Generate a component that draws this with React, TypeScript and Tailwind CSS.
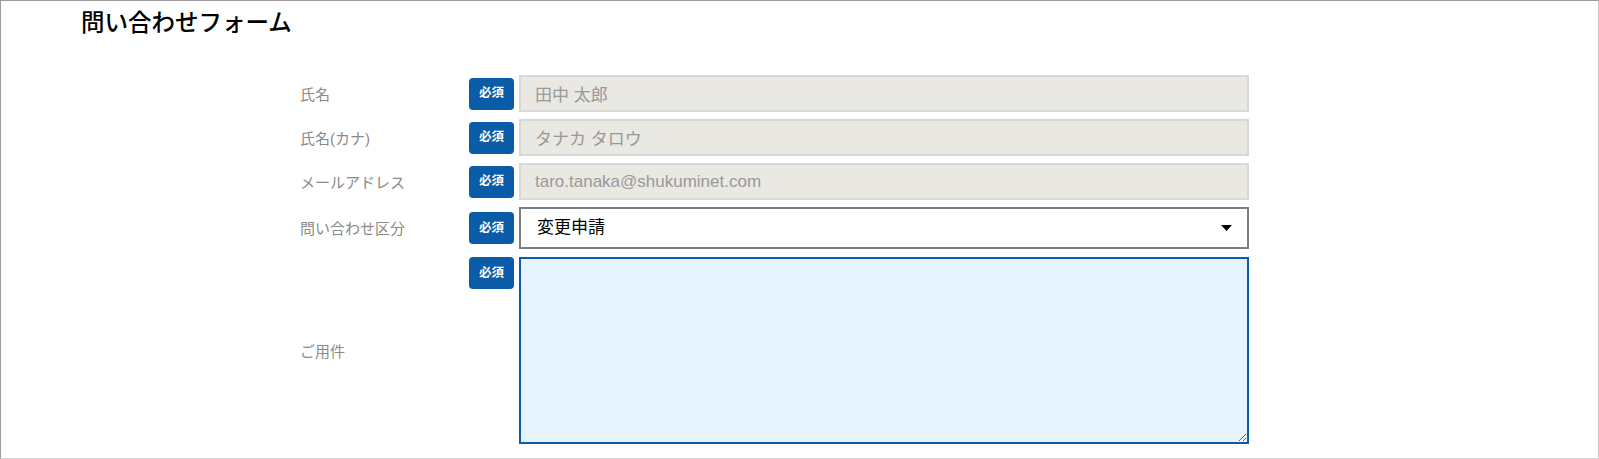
import React from "react";

const font = { fontFamily: '"Liberation Sans", "Noto Sans CJK JP", sans-serif' };

function Badge({ top = false }: { top?: boolean }) {
  return (
    <div
      className={`w-[45px] h-[32px] rounded-[4px] bg-[#0a5ca8] text-white text-[12.5px] font-semibold flex items-center justify-center shrink-0 ${top ? "self-start" : ""}`}
    >
      必須
    </div>
  );
}

function Row({ label, children, top = false, height }: { label: string; children: React.ReactNode; top?: boolean; height: string }) {
  return (
    <div className={`flex items-center ${height}`}>
      <div className="w-[169px] shrink-0 text-[15px] text-[#8a8a8a] self-center pt-[3px]">{label}</div>
      <div className={`flex ${top ? "items-start" : "items-center"} gap-[5px] h-full`}>
        <Badge top={top} />
        {children}
      </div>
    </div>
  );
}

export default function App() {
  return (
    <div
      className="w-[1599px] h-[459px] border-t border-l border-[#9c9c9c] border-r border-r-[#c8c8c8] border-b border-b-[#d4d4d4] bg-white overflow-hidden"
      style={font}
    >
      <div className="pl-[80px] pt-[7px] h-[74px]">
        <h1 className="text-[23.5px] leading-[30px] font-medium text-black">問い合わせフォーム</h1>
      </div>
      <div className="pl-[299px] flex flex-col gap-[7px]">
        <Row label="氏名" height="h-[37px]">
          <input
            readOnly
            value="田中 太郎"
            className="w-[730px] h-[37px] bg-[#e9e8e2] border-2 border-[#d8d8d4] pl-[14px] text-[17px] text-[#999999] outline-none"
            style={font}
          />
        </Row>
        <Row label="氏名(カナ)" height="h-[37px]">
          <input
            readOnly
            value="タナカ タロウ"
            className="w-[730px] h-[37px] bg-[#e9e8e2] border-2 border-[#d8d8d4] pl-[14px] text-[17px] text-[#999999] outline-none"
            style={font}
          />
        </Row>
        <Row label="メールアドレス" height="h-[37px]">
          <input
            readOnly
            value="taro.tanaka@shukuminet.com"
            className="w-[730px] h-[37px] bg-[#e9e8e2] border-2 border-[#d8d8d4] pl-[14px] text-[17px] text-[#999999] outline-none"
            style={font}
          />
        </Row>
        <Row label="問い合わせ区分" height="h-[42px]">
          <div className="w-[730px] h-[42px] bg-white border-2 border-[#7b7e82] pl-[16px] pr-[15px] flex items-center justify-between text-[17px] text-black">
            <span>変更申請</span>
            <svg width="11" height="6" viewBox="0 0 11 6">
              <polygon points="0,0 11,0 5.5,6" fill="#000" />
            </svg>
          </div>
        </Row>
        <div className="mt-[1px]">
          <Row label="ご用件" height="h-[187px]" top>
            <textarea
              className="w-[730px] h-[187px] bg-[#e6f3fc] border-2 border-[#0a5ca8] outline-none resize p-2 text-[17px]"
              style={font}
            />
          </Row>
        </div>
      </div>
    </div>
  );
}
